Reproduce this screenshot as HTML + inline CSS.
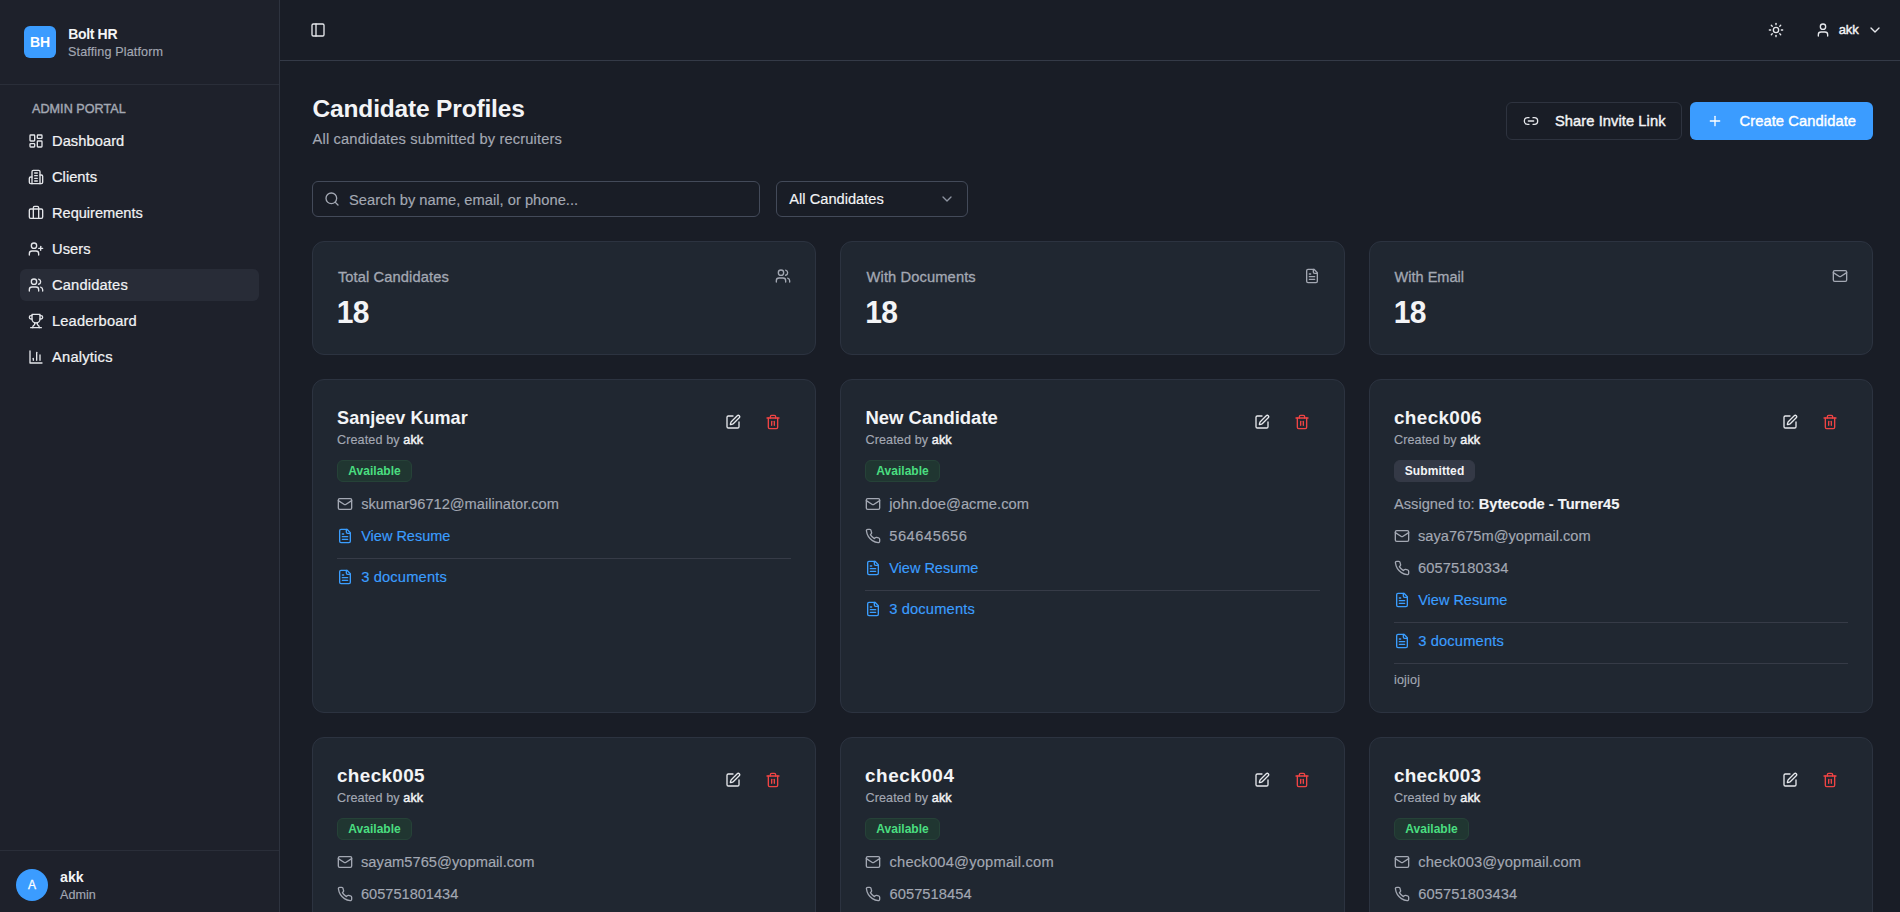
<!DOCTYPE html>
<html lang="en">
<head>
<meta charset="utf-8">
<title>Candidate Profiles</title>
<style>
*{box-sizing:border-box;margin:0;padding:0}
html,body{width:1900px;height:912px;overflow:hidden;background:#191d26;font-family:"Liberation Sans",sans-serif;color:#f3f4f6;-webkit-font-smoothing:antialiased}
svg{display:block;fill:none;stroke:currentColor;stroke-width:2;stroke-linecap:round;stroke-linejoin:round}
.abs{position:absolute}
.t{position:absolute;white-space:nowrap;line-height:1}
/* sidebar */
#side{position:absolute;left:0;top:0;width:280px;height:912px;background:#1e212b;border-right:1px solid #2e333f}
#side .hd{position:absolute;left:0;top:0;width:279px;height:85px;border-bottom:1px solid #2a2e39}
#logo{position:absolute;left:24px;top:26px;width:32px;height:32px;border-radius:6px;background:#3b9cff;color:#fff;font-weight:700;font-size:14px;line-height:32px;text-align:center}
.nav{position:absolute;left:20px;width:239px;height:32px;border-radius:6px;color:#f1f2f4}
.nav.act{background:#282c37}
.nav svg{position:absolute;left:8px;top:8px;width:16px;height:16px;color:#e3e5e9}
.nav span{position:absolute;left:32px;top:0;line-height:32px;font-size:14px;font-weight:400;white-space:nowrap;-webkit-text-stroke:0.22px currentColor}
#side .ft{position:absolute;left:0;top:850px;width:279px;height:62px;border-top:1px solid #2a2e39}
#ava{position:absolute;left:16px;top:869px;width:32px;height:32px;border-radius:16px;background:#3b9cff;color:#fff;font-size:12px;line-height:32px;text-align:center;-webkit-text-stroke:0.3px #fff}
/* header */
#top{position:absolute;left:280px;top:0;width:1620px;height:61px;border-bottom:1px solid #343a47;background:#191d26}
/* main */
.btn{position:absolute;top:102px;height:38px;border-radius:6px}
.card{position:absolute;background:#202731;border:1px solid #2c3340;border-radius:12px}
.muted{color:#a3a8b3}
.blue{color:#3b9eff}
.cn{font-size:18px;font-weight:700}
.cb{font-size:12px}
.cb b{color:#f3f4f6;font-weight:400;-webkit-text-stroke:0.45px currentColor}.row b{color:#f3f4f6;font-weight:700}
.row{font-size:14px;-webkit-text-stroke:0.15px currentColor}
#sub,#ph,#sel,#brand2,#urole,.cb,#nt2{-webkit-text-stroke:0.15px currentColor}
.bdg{height:22px;border-radius:6px;font-size:12px;font-weight:700;line-height:20px;text-align:center}
.bdg.av{background:#203631;border:1px solid #264238;color:#4ade80}
.bdg.sb{background:#343946;border:1px solid #343946;color:#f3f4f6}
.sep{height:1px;background:#363b47}
/*FIT*/
#brand{font-size:14.00px!important;letter-spacing:-0.346px;left:68.25px!important}
#brand2{font-size:12.60px!important;letter-spacing:0.133px;left:68.00px!important}
#portal{font-size:12.60px!important;letter-spacing:0.040px;left:32.00px!important}
#uname{font-size:14.23px!important;letter-spacing:0.008px;left:60.00px!important}
#urole{font-size:12.60px!important;letter-spacing:0.012px;left:60.00px!important}
#hakk{font-size:13.00px!important;letter-spacing:-0.117px;left:1558.75px!important}
#nv0{font-size:14.70px!important;letter-spacing:0.049px;left:32.00px!important}
#nv1{font-size:14.70px!important;letter-spacing:0.016px;left:32.00px!important}
#nv2{font-size:14.58px!important;letter-spacing:-0.001px;left:32.00px!important}
#nv3{font-size:14.70px!important;letter-spacing:0.035px;left:32.00px!important}
#nv4{font-size:14.70px!important;letter-spacing:0.160px;left:32.00px!important}
#nv5{font-size:14.70px!important;letter-spacing:0.144px;left:32.00px!important}
#nv6{font-size:14.70px!important;letter-spacing:0.215px;left:32.00px!important}
#title{font-size:24.50px!important;letter-spacing:-0.171px;left:312.60px!important}
#sub{font-size:14.70px!important;letter-spacing:0.141px;left:312.60px!important}
#b1{font-size:14.70px!important;letter-spacing:0.068px;left:1555.00px!important}
#b2{font-size:14.70px!important;letter-spacing:0.091px;left:1739.50px!important}
#ph{font-size:14.70px!important;letter-spacing:0.015px;left:349.00px!important}
#sel{font-size:14.65px!important;letter-spacing:0.006px;left:789.30px!important}
#sl0{font-size:14.70px!important;letter-spacing:0.099px;left:337.90px!important}
#sl1{font-size:14.70px!important;letter-spacing:0.104px;left:866.60px!important}
#sl2{font-size:14.52px!important;letter-spacing:0.003px;left:1394.60px!important}
#sv0{font-size:30.00px!important;letter-spacing:-0.595px;left:336.70px!important}
#sv1{font-size:30.00px!important;letter-spacing:-0.595px;left:865.20px!important}
#sv2{font-size:30.00px!important;letter-spacing:-0.595px;left:1393.70px!important}
#cn0{font-size:18.07px!important;letter-spacing:0.007px;left:337.10px!important}
#cb0{font-size:12.60px!important;letter-spacing:0.106px;left:337.00px!important}
#bg0{font-size:12.00px!important;letter-spacing:0.031px}
#r0_0{font-size:14.62px!important;letter-spacing:0.006px;left:361.20px!important}
#r0_1{font-size:14.50px!important;letter-spacing:-0.000px;left:361.20px!important}
#d0{font-size:14.70px!important;letter-spacing:0.149px;left:361.20px!important}
#cn1{font-size:18.46px!important;letter-spacing:0.011px;left:865.50px!important}
#cb1{font-size:12.60px!important;letter-spacing:0.106px;left:865.50px!important}
#bg1{font-size:12.00px!important;letter-spacing:0.031px}
#r1_0{font-size:14.70px!important;letter-spacing:0.049px;left:889.20px!important}
#r1_1{font-size:14.70px!important;letter-spacing:0.534px;left:889.20px!important}
#r1_2{font-size:14.50px!important;letter-spacing:-0.000px;left:889.20px!important}
#d1{font-size:14.70px!important;letter-spacing:0.149px;left:889.20px!important}
#cn2{font-size:18.90px!important;letter-spacing:0.358px;left:1394.00px!important}
#cb2{font-size:12.60px!important;letter-spacing:0.106px;left:1394.00px!important}
#bg2{font-size:12.00px!important;letter-spacing:0.116px}
#as2{font-size:14.66px!important;letter-spacing:0.001px;left:1394.00px!important}
#r2_0{font-size:14.63px!important;letter-spacing:0.003px;left:1418.00px!important}
#r2_1{font-size:14.70px!important;letter-spacing:0.054px;left:1418.00px!important}
#r2_2{font-size:14.50px!important;letter-spacing:-0.000px;left:1418.20px!important}
#d2{font-size:14.70px!important;letter-spacing:0.149px;left:1418.20px!important}
#nt2{font-size:12.60px!important;letter-spacing:0.159px;left:1394.00px!important}
#cn3{font-size:18.90px!important;letter-spacing:0.358px;left:337.00px!important}
#cb3{font-size:12.60px!important;letter-spacing:0.106px;left:337.00px!important}
#bg3{font-size:12.00px!important;letter-spacing:0.031px}
#r3_0{font-size:14.70px!important;letter-spacing:0.011px;left:361.00px!important}
#r3_1{font-size:14.58px!important;letter-spacing:0.000px;left:361.00px!important}
#cn4{font-size:18.90px!important;letter-spacing:0.544px;left:865.00px!important}
#cb4{font-size:12.60px!important;letter-spacing:0.106px;left:865.50px!important}
#bg4{font-size:12.00px!important;letter-spacing:0.031px}
#r4_0{font-size:14.70px!important;letter-spacing:0.209px;left:889.50px!important}
#r4_1{font-size:14.70px!important;letter-spacing:0.046px;left:889.50px!important}
#cn5{font-size:18.90px!important;letter-spacing:0.272px;left:1394.00px!important}
#cb5{font-size:12.60px!important;letter-spacing:0.106px;left:1394.00px!important}
#bg5{font-size:12.00px!important;letter-spacing:0.031px}
#r5_0{font-size:14.70px!important;letter-spacing:0.135px;left:1418.30px!important}
#r5_1{font-size:14.70px!important;letter-spacing:0.070px;left:1418.30px!important}
/*ENDFIT*/
</style>
</head>
<body>
<div id="side">
  <div class="hd"></div>
  <div id="logo">BH</div>
  <div class="t" id="brand" style="left:68px;top:27px;font-size:14px;font-weight:700">Bolt HR</div>
  <div class="t muted" id="brand2" style="left:68px;top:46px;font-size:12px">Staffing Platform</div>
  <div class="t muted" id="portal" style="left:32px;top:103px;font-size:12px;font-weight:400;-webkit-text-stroke:0.4px currentColor">ADMIN PORTAL</div>
  <div class="nav" style="top:125px"><svg viewBox="0 0 24 24"><rect width="7" height="9" x="3" y="3" rx="1"/><rect width="7" height="5" x="14" y="3" rx="1"/><rect width="7" height="9" x="14" y="12" rx="1"/><rect width="7" height="5" x="3" y="16" rx="1"/></svg><span id="nv0">Dashboard</span></div>
  <div class="nav" style="top:161px"><svg viewBox="0 0 24 24"><path d="M6 22V4a2 2 0 0 1 2-2h8a2 2 0 0 1 2 2v18Z"/><path d="M6 12H4a2 2 0 0 0-2 2v6a2 2 0 0 0 2 2h2"/><path d="M18 9h2a2 2 0 0 1 2 2v9a2 2 0 0 1-2 2h-2"/><path d="M10 6h4"/><path d="M10 10h4"/><path d="M10 14h4"/><path d="M10 18h4"/></svg><span id="nv1">Clients</span></div>
  <div class="nav" style="top:197px"><svg viewBox="0 0 24 24"><path d="M16 20V4a2 2 0 0 0-2-2h-4a2 2 0 0 0-2 2v16"/><rect width="20" height="14" x="2" y="6" rx="2"/></svg><span id="nv2">Requirements</span></div>
  <div class="nav" style="top:233px"><svg viewBox="0 0 24 24"><path d="M16 21v-2a4 4 0 0 0-4-4H6a4 4 0 0 0-4 4v2"/><circle cx="9" cy="7" r="4"/><line x1="19" x2="19" y1="8" y2="14"/><line x1="22" x2="16" y1="11" y2="11"/></svg><span id="nv3">Users</span></div>
  <div class="nav act" style="top:269px"><svg viewBox="0 0 24 24"><path d="M16 21v-2a4 4 0 0 0-4-4H6a4 4 0 0 0-4 4v2"/><circle cx="9" cy="7" r="4"/><path d="M22 21v-2a4 4 0 0 0-3-3.87"/><path d="M16 3.13a4 4 0 0 1 0 7.75"/></svg><span id="nv4">Candidates</span></div>
  <div class="nav" style="top:305px"><svg viewBox="0 0 24 24"><path d="M6 9H4.5a2.5 2.5 0 0 1 0-5H6"/><path d="M18 9h1.5a2.5 2.5 0 0 0 0-5H18"/><path d="M4 22h16"/><path d="M10 14.66V17c0 .55-.47.98-.97 1.21C7.85 18.75 7 20.24 7 22"/><path d="M14 14.66V17c0 .55.47.98.97 1.21C16.15 18.75 17 20.24 17 22"/><path d="M18 2H6v7a6 6 0 0 0 12 0V2Z"/></svg><span id="nv5">Leaderboard</span></div>
  <div class="nav" style="top:341px"><svg viewBox="0 0 24 24"><path d="M3 3v18h18"/><path d="M18 17V9"/><path d="M13 17V5"/><path d="M8 17v-3"/></svg><span id="nv6">Analytics</span></div>
  <div class="ft"></div>
  <div id="ava">A</div>
  <div class="t" id="uname" style="left:60px;top:870px;font-size:14px;font-weight:700">akk</div>
  <div class="t muted" id="urole" style="left:60px;top:889px;font-size:12px">Admin</div>
</div>
<div id="top">
  <svg class="abs" style="left:30px;top:22px;width:16px;height:16px;color:#e6e8ec" viewBox="0 0 24 24"><rect width="18" height="18" x="3" y="3" rx="2"/><path d="M9 3v18"/></svg>
  <svg class="abs" style="left:1488px;top:22px;width:16px;height:16px;color:#e6e8ec" viewBox="0 0 24 24"><circle cx="12" cy="12" r="4"/><path d="M12 2v2"/><path d="M12 20v2"/><path d="m4.93 4.930 1.41 1.41"/><path d="m17.66 17.66 1.41 1.41"/><path d="M2 12h2"/><path d="M20 12h2"/><path d="m6.340 17.66-1.41 1.41"/><path d="m19.07 4.930-1.41 1.41"/></svg>
  <svg class="abs" style="left:1535px;top:22px;width:16px;height:16px;color:#e6e8ec" viewBox="0 0 24 24"><path d="M19 21v-2a4 4 0 0 0-4-4H9a4 4 0 0 0-4 4v2"/><circle cx="12" cy="7" r="4"/></svg>
  <div class="t" id="hakk" style="left:1559px;top:23px;font-size:13px;font-weight:400;-webkit-text-stroke:0.4px currentColor">akk</div>
  <svg class="abs" style="left:1587px;top:22px;width:16px;height:16px;color:#e6e8ec" viewBox="0 0 24 24"><path d="m6 9 6 6 6-6"/></svg>
</div>
<div class="t" id="title" style="left:312px;top:96.5px;font-size:24.5px;font-weight:700">Candidate Profiles</div>
<div class="t muted" id="sub" style="left:312px;top:132px;font-size:14px">All candidates submitted by recruiters</div>
<div class="btn" style="left:1506px;width:176px;border:1px solid #2e333f;background:#191d26"></div>
<svg class="abs" style="left:1523px;top:113px;width:16px;height:16px;color:#e6e8ec" viewBox="0 0 24 24"><path d="M9 17H7A5 5 0 0 1 7 7h2"/><path d="M15 7h2a5 5 0 1 1 0 10h-2"/><line x1="8" x2="16" y1="12" y2="12"/></svg>
<div class="t" id="b1" style="left:1555px;top:114px;font-size:14px;font-weight:400;-webkit-text-stroke:0.4px currentColor">Share Invite Link</div>
<div class="btn" style="left:1690px;width:183px;background:#3b9cff"></div>
<svg class="abs" style="left:1707px;top:113px;width:16px;height:16px;color:#fff" viewBox="0 0 24 24"><path d="M5 12h14"/><path d="M12 5v14"/></svg>
<div class="t" id="b2" style="left:1739px;top:114px;font-size:14px;font-weight:400;color:#fff;-webkit-text-stroke:0.4px currentColor">Create Candidate</div>
<div class="abs" style="left:312px;top:181px;width:448px;height:36px;border:1px solid #434a59;border-radius:6px;background:#191d26"></div>
<svg class="abs" style="left:324px;top:191px;width:16px;height:16px;color:#a3a8b3" viewBox="0 0 24 24"><circle cx="11" cy="11" r="8"/><path d="m21 21-4.300-4.300"/></svg>
<div class="t muted" id="ph" style="left:349px;top:193px;font-size:14px">Search by name, email, or phone...</div>
<div class="abs" style="left:776px;top:181px;width:192px;height:36px;border:1px solid #434a59;border-radius:6px;background:#191d26"></div>
<div class="t" id="sel" style="left:789px;top:192px;font-size:14px">All Candidates</div>
<svg class="abs" style="left:939px;top:191px;width:16px;height:16px;color:#8d93a0" viewBox="0 0 24 24"><path d="m6 9 6 6 6-6"/></svg>
<div class="card" style="left:312px;top:241px;width:504px;height:114px"></div>
<div class="t muted" id="sl0" style="left:337px;top:269.6px;font-size:14px;-webkit-text-stroke:0.3px currentColor">Total Candidates</div>
<svg class="abs" style="left:775px;top:268px;width:16px;height:16px;color:#a3a8b3" viewBox="0 0 24 24"><path d="M16 21v-2a4 4 0 0 0-4-4H6a4 4 0 0 0-4 4v2"/><circle cx="9" cy="7" r="4"/><path d="M22 21v-2a4 4 0 0 0-3-3.870"/><path d="M16 3.130a4 4 0 0 1 0 7.750"/></svg>
<div class="t" id="sv0" style="left:337px;top:297px;font-size:30px;transform:scaleY(1.07);transform-origin:0 50%;font-weight:700">18</div>
<div class="card" style="left:840px;top:241px;width:505px;height:114px"></div>
<div class="t muted" id="sl1" style="left:865px;top:269.6px;font-size:14px;-webkit-text-stroke:0.3px currentColor">With Documents</div>
<svg class="abs" style="left:1304px;top:268px;width:16px;height:16px;color:#a3a8b3" viewBox="0 0 24 24"><path d="M15 2H6a2 2 0 0 0-2 2v16a2 2 0 0 0 2 2h12a2 2 0 0 0 2-2V7Z"/><path d="M14 2v4a2 2 0 0 0 2 2h4"/><path d="M10 9H8"/><path d="M16 13H8"/><path d="M16 17H8"/></svg>
<div class="t" id="sv1" style="left:865px;top:297px;font-size:30px;transform:scaleY(1.07);transform-origin:0 50%;font-weight:700">18</div>
<div class="card" style="left:1369px;top:241px;width:504px;height:114px"></div>
<div class="t muted" id="sl2" style="left:1394px;top:269.6px;font-size:14px;-webkit-text-stroke:0.3px currentColor">With Email</div>
<svg class="abs" style="left:1832px;top:268px;width:16px;height:16px;color:#a3a8b3" viewBox="0 0 24 24"><rect width="20" height="16" x="2" y="4" rx="2"/><path d="m22 7-8.970 5.700a1.940 1.940 0 0 1-2.060 0L2 7"/></svg>
<div class="t" id="sv2" style="left:1394px;top:297px;font-size:30px;transform:scaleY(1.07);transform-origin:0 50%;font-weight:700">18</div>
<div class="card" style="left:312px;top:379px;width:504px;height:334px"></div>
<div class="t cn" id="cn0" style="left:337px;top:409px">Sanjeev Kumar</div>
<div class="t cb muted" id="cb0" style="left:337px;top:434px">Created by <b>akk</b></div>
<svg class="abs" style="left:725px;top:414px;width:16px;height:16px;color:#e6e8ec" viewBox="0 0 24 24"><path d="M12 3H5a2 2 0 0 0-2 2v14a2 2 0 0 0 2 2h14a2 2 0 0 0 2-2v-7"/><path d="M18.375 2.625a1 1 0 0 1 3 3l-9.013 9.014a2 2 0 0 1-.853.505l-2.873.840a.500.500 0 0 1-.620-.620l.840-2.873a2 2 0 0 1 .506-.852z"/></svg>
<svg class="abs" style="left:765px;top:414px;width:16px;height:16px;color:#ef4444" viewBox="0 0 24 24"><path d="M3 6h18"/><path d="M19 6v14c0 1-1 2-2 2H7c-1 0-2-1-2-2V6"/><path d="M8 6V4c0-1 1-2 2-2h4c1 0 2 1 2 2v2"/><line x1="10" x2="10" y1="11" y2="17"/><line x1="14" x2="14" y1="11" y2="17"/></svg>
<div class="abs bdg av" style="left:337px;top:460px;width:75px"><span id="bg0">Available</span></div>
<svg class="abs" style="left:337px;top:496px;width:16px;height:16px;color:#a3a8b3" viewBox="0 0 24 24"><rect width="20" height="16" x="2" y="4" rx="2"/><path d="m22 7-8.970 5.700a1.940 1.940 0 0 1-2.060 0L2 7"/></svg>
<div class="t row muted" id="r0_0" style="left:361px;top:497px">skumar96712@mailinator.com</div>
<svg class="abs" style="left:337px;top:528px;width:16px;height:16px;color:#3b9eff" viewBox="0 0 24 24"><path d="M15 2H6a2 2 0 0 0-2 2v16a2 2 0 0 0 2 2h12a2 2 0 0 0 2-2V7Z"/><path d="M14 2v4a2 2 0 0 0 2 2h4"/><path d="M10 9H8"/><path d="M16 13H8"/><path d="M16 17H8"/></svg>
<div class="t row blue" id="r0_1" style="left:361px;top:529px">View Resume</div>
<div class="abs sep" style="left:337px;top:558px;width:454px"></div>
<svg class="abs" style="left:337px;top:569px;width:16px;height:16px;color:#3b9eff" viewBox="0 0 24 24"><path d="M15 2H6a2 2 0 0 0-2 2v16a2 2 0 0 0 2 2h12a2 2 0 0 0 2-2V7Z"/><path d="M14 2v4a2 2 0 0 0 2 2h4"/><path d="M10 9H8"/><path d="M16 13H8"/><path d="M16 17H8"/></svg>
<div class="t row blue" id="d0" style="left:361px;top:570px">3 documents</div>
<div class="card" style="left:840px;top:379px;width:505px;height:334px"></div>
<div class="t cn" id="cn1" style="left:865px;top:409px">New Candidate</div>
<div class="t cb muted" id="cb1" style="left:865px;top:434px">Created by <b>akk</b></div>
<svg class="abs" style="left:1254px;top:414px;width:16px;height:16px;color:#e6e8ec" viewBox="0 0 24 24"><path d="M12 3H5a2 2 0 0 0-2 2v14a2 2 0 0 0 2 2h14a2 2 0 0 0 2-2v-7"/><path d="M18.375 2.625a1 1 0 0 1 3 3l-9.013 9.014a2 2 0 0 1-.853.505l-2.873.840a.500.500 0 0 1-.620-.620l.840-2.873a2 2 0 0 1 .506-.852z"/></svg>
<svg class="abs" style="left:1294px;top:414px;width:16px;height:16px;color:#ef4444" viewBox="0 0 24 24"><path d="M3 6h18"/><path d="M19 6v14c0 1-1 2-2 2H7c-1 0-2-1-2-2V6"/><path d="M8 6V4c0-1 1-2 2-2h4c1 0 2 1 2 2v2"/><line x1="10" x2="10" y1="11" y2="17"/><line x1="14" x2="14" y1="11" y2="17"/></svg>
<div class="abs bdg av" style="left:865px;top:460px;width:75px"><span id="bg1">Available</span></div>
<svg class="abs" style="left:865px;top:496px;width:16px;height:16px;color:#a3a8b3" viewBox="0 0 24 24"><rect width="20" height="16" x="2" y="4" rx="2"/><path d="m22 7-8.970 5.700a1.940 1.940 0 0 1-2.060 0L2 7"/></svg>
<div class="t row muted" id="r1_0" style="left:889px;top:497px">john.doe@acme.com</div>
<svg class="abs" style="left:865px;top:528px;width:16px;height:16px;color:#a3a8b3" viewBox="0 0 24 24"><path d="M22 16.920v3a2 2 0 0 1-2.180 2 19.790 19.790 0 0 1-8.630-3.070 19.500 19.500 0 0 1-6-6 19.790 19.790 0 0 1-3.070-8.670A2 2 0 0 1 4.110 2h3a2 2 0 0 1 2 1.720 12.840 12.840 0 0 0 .700 2.810 2 2 0 0 1-.450 2.110L8.090 9.910a16 16 0 0 0 6 6l1.270-1.270a2 2 0 0 1 2.110-.450 12.840 12.840 0 0 0 2.810.700A2 2 0 0 1 22 16.920z"/></svg>
<div class="t row muted" id="r1_1" style="left:889px;top:529px">564645656</div>
<svg class="abs" style="left:865px;top:560px;width:16px;height:16px;color:#3b9eff" viewBox="0 0 24 24"><path d="M15 2H6a2 2 0 0 0-2 2v16a2 2 0 0 0 2 2h12a2 2 0 0 0 2-2V7Z"/><path d="M14 2v4a2 2 0 0 0 2 2h4"/><path d="M10 9H8"/><path d="M16 13H8"/><path d="M16 17H8"/></svg>
<div class="t row blue" id="r1_2" style="left:889px;top:561px">View Resume</div>
<div class="abs sep" style="left:865px;top:590px;width:455px"></div>
<svg class="abs" style="left:865px;top:601px;width:16px;height:16px;color:#3b9eff" viewBox="0 0 24 24"><path d="M15 2H6a2 2 0 0 0-2 2v16a2 2 0 0 0 2 2h12a2 2 0 0 0 2-2V7Z"/><path d="M14 2v4a2 2 0 0 0 2 2h4"/><path d="M10 9H8"/><path d="M16 13H8"/><path d="M16 17H8"/></svg>
<div class="t row blue" id="d1" style="left:889px;top:602px">3 documents</div>
<div class="card" style="left:1369px;top:379px;width:504px;height:334px"></div>
<div class="t cn" id="cn2" style="left:1394px;top:409px">check006</div>
<div class="t cb muted" id="cb2" style="left:1394px;top:434px">Created by <b>akk</b></div>
<svg class="abs" style="left:1782px;top:414px;width:16px;height:16px;color:#e6e8ec" viewBox="0 0 24 24"><path d="M12 3H5a2 2 0 0 0-2 2v14a2 2 0 0 0 2 2h14a2 2 0 0 0 2-2v-7"/><path d="M18.375 2.625a1 1 0 0 1 3 3l-9.013 9.014a2 2 0 0 1-.853.505l-2.873.840a.500.500 0 0 1-.620-.620l.840-2.873a2 2 0 0 1 .506-.852z"/></svg>
<svg class="abs" style="left:1822px;top:414px;width:16px;height:16px;color:#ef4444" viewBox="0 0 24 24"><path d="M3 6h18"/><path d="M19 6v14c0 1-1 2-2 2H7c-1 0-2-1-2-2V6"/><path d="M8 6V4c0-1 1-2 2-2h4c1 0 2 1 2 2v2"/><line x1="10" x2="10" y1="11" y2="17"/><line x1="14" x2="14" y1="11" y2="17"/></svg>
<div class="abs bdg sb" style="left:1394px;top:460px;width:81px"><span id="bg2">Submitted</span></div>
<div class="t row muted" id="as2" style="left:1394px;top:497px">Assigned to: <b>Bytecode - Turner45</b></div>
<svg class="abs" style="left:1394px;top:528px;width:16px;height:16px;color:#a3a8b3" viewBox="0 0 24 24"><rect width="20" height="16" x="2" y="4" rx="2"/><path d="m22 7-8.970 5.700a1.940 1.940 0 0 1-2.060 0L2 7"/></svg>
<div class="t row muted" id="r2_0" style="left:1418px;top:529px">saya7675m@yopmail.com</div>
<svg class="abs" style="left:1394px;top:560px;width:16px;height:16px;color:#a3a8b3" viewBox="0 0 24 24"><path d="M22 16.920v3a2 2 0 0 1-2.180 2 19.790 19.790 0 0 1-8.630-3.070 19.500 19.500 0 0 1-6-6 19.790 19.790 0 0 1-3.070-8.670A2 2 0 0 1 4.110 2h3a2 2 0 0 1 2 1.720 12.840 12.840 0 0 0 .700 2.810 2 2 0 0 1-.450 2.110L8.090 9.910a16 16 0 0 0 6 6l1.270-1.270a2 2 0 0 1 2.110-.450 12.840 12.840 0 0 0 2.810.700A2 2 0 0 1 22 16.920z"/></svg>
<div class="t row muted" id="r2_1" style="left:1418px;top:561px">60575180334</div>
<svg class="abs" style="left:1394px;top:592px;width:16px;height:16px;color:#3b9eff" viewBox="0 0 24 24"><path d="M15 2H6a2 2 0 0 0-2 2v16a2 2 0 0 0 2 2h12a2 2 0 0 0 2-2V7Z"/><path d="M14 2v4a2 2 0 0 0 2 2h4"/><path d="M10 9H8"/><path d="M16 13H8"/><path d="M16 17H8"/></svg>
<div class="t row blue" id="r2_2" style="left:1418px;top:593px">View Resume</div>
<div class="abs sep" style="left:1394px;top:622px;width:454px"></div>
<svg class="abs" style="left:1394px;top:633px;width:16px;height:16px;color:#3b9eff" viewBox="0 0 24 24"><path d="M15 2H6a2 2 0 0 0-2 2v16a2 2 0 0 0 2 2h12a2 2 0 0 0 2-2V7Z"/><path d="M14 2v4a2 2 0 0 0 2 2h4"/><path d="M10 9H8"/><path d="M16 13H8"/><path d="M16 17H8"/></svg>
<div class="t row blue" id="d2" style="left:1418px;top:634px">3 documents</div>
<div class="abs sep" style="left:1394px;top:663px;width:454px"></div>
<div class="t muted" id="nt2" style="left:1394px;top:674px;font-size:12px">iojioj</div>
<div class="card" style="left:312px;top:737px;width:504px;height:300px"></div>
<div class="t cn" id="cn3" style="left:337px;top:767px">check005</div>
<div class="t cb muted" id="cb3" style="left:337px;top:792px">Created by <b>akk</b></div>
<svg class="abs" style="left:725px;top:772px;width:16px;height:16px;color:#e6e8ec" viewBox="0 0 24 24"><path d="M12 3H5a2 2 0 0 0-2 2v14a2 2 0 0 0 2 2h14a2 2 0 0 0 2-2v-7"/><path d="M18.375 2.625a1 1 0 0 1 3 3l-9.013 9.014a2 2 0 0 1-.853.505l-2.873.840a.500.500 0 0 1-.620-.620l.840-2.873a2 2 0 0 1 .506-.852z"/></svg>
<svg class="abs" style="left:765px;top:772px;width:16px;height:16px;color:#ef4444" viewBox="0 0 24 24"><path d="M3 6h18"/><path d="M19 6v14c0 1-1 2-2 2H7c-1 0-2-1-2-2V6"/><path d="M8 6V4c0-1 1-2 2-2h4c1 0 2 1 2 2v2"/><line x1="10" x2="10" y1="11" y2="17"/><line x1="14" x2="14" y1="11" y2="17"/></svg>
<div class="abs bdg av" style="left:337px;top:818px;width:75px"><span id="bg3">Available</span></div>
<svg class="abs" style="left:337px;top:854px;width:16px;height:16px;color:#a3a8b3" viewBox="0 0 24 24"><rect width="20" height="16" x="2" y="4" rx="2"/><path d="m22 7-8.970 5.700a1.940 1.940 0 0 1-2.060 0L2 7"/></svg>
<div class="t row muted" id="r3_0" style="left:361px;top:855px">sayam5765@yopmail.com</div>
<svg class="abs" style="left:337px;top:886px;width:16px;height:16px;color:#a3a8b3" viewBox="0 0 24 24"><path d="M22 16.920v3a2 2 0 0 1-2.180 2 19.790 19.790 0 0 1-8.630-3.070 19.500 19.500 0 0 1-6-6 19.790 19.790 0 0 1-3.070-8.670A2 2 0 0 1 4.110 2h3a2 2 0 0 1 2 1.720 12.840 12.840 0 0 0 .700 2.810 2 2 0 0 1-.450 2.110L8.090 9.910a16 16 0 0 0 6 6l1.270-1.270a2 2 0 0 1 2.110-.450 12.840 12.840 0 0 0 2.810.700A2 2 0 0 1 22 16.920z"/></svg>
<div class="t row muted" id="r3_1" style="left:361px;top:887px">605751801434</div>
<div class="card" style="left:840px;top:737px;width:505px;height:300px"></div>
<div class="t cn" id="cn4" style="left:865px;top:767px">check004</div>
<div class="t cb muted" id="cb4" style="left:865px;top:792px">Created by <b>akk</b></div>
<svg class="abs" style="left:1254px;top:772px;width:16px;height:16px;color:#e6e8ec" viewBox="0 0 24 24"><path d="M12 3H5a2 2 0 0 0-2 2v14a2 2 0 0 0 2 2h14a2 2 0 0 0 2-2v-7"/><path d="M18.375 2.625a1 1 0 0 1 3 3l-9.013 9.014a2 2 0 0 1-.853.505l-2.873.840a.500.500 0 0 1-.620-.620l.840-2.873a2 2 0 0 1 .506-.852z"/></svg>
<svg class="abs" style="left:1294px;top:772px;width:16px;height:16px;color:#ef4444" viewBox="0 0 24 24"><path d="M3 6h18"/><path d="M19 6v14c0 1-1 2-2 2H7c-1 0-2-1-2-2V6"/><path d="M8 6V4c0-1 1-2 2-2h4c1 0 2 1 2 2v2"/><line x1="10" x2="10" y1="11" y2="17"/><line x1="14" x2="14" y1="11" y2="17"/></svg>
<div class="abs bdg av" style="left:865px;top:818px;width:75px"><span id="bg4">Available</span></div>
<svg class="abs" style="left:865px;top:854px;width:16px;height:16px;color:#a3a8b3" viewBox="0 0 24 24"><rect width="20" height="16" x="2" y="4" rx="2"/><path d="m22 7-8.970 5.700a1.940 1.940 0 0 1-2.060 0L2 7"/></svg>
<div class="t row muted" id="r4_0" style="left:889px;top:855px">check004@yopmail.com</div>
<svg class="abs" style="left:865px;top:886px;width:16px;height:16px;color:#a3a8b3" viewBox="0 0 24 24"><path d="M22 16.920v3a2 2 0 0 1-2.180 2 19.790 19.790 0 0 1-8.630-3.070 19.500 19.500 0 0 1-6-6 19.790 19.790 0 0 1-3.070-8.670A2 2 0 0 1 4.110 2h3a2 2 0 0 1 2 1.720 12.840 12.840 0 0 0 .700 2.810 2 2 0 0 1-.450 2.110L8.090 9.910a16 16 0 0 0 6 6l1.270-1.270a2 2 0 0 1 2.110-.450 12.840 12.840 0 0 0 2.810.700A2 2 0 0 1 22 16.920z"/></svg>
<div class="t row muted" id="r4_1" style="left:889px;top:887px">6057518454</div>
<div class="card" style="left:1369px;top:737px;width:504px;height:300px"></div>
<div class="t cn" id="cn5" style="left:1394px;top:767px">check003</div>
<div class="t cb muted" id="cb5" style="left:1394px;top:792px">Created by <b>akk</b></div>
<svg class="abs" style="left:1782px;top:772px;width:16px;height:16px;color:#e6e8ec" viewBox="0 0 24 24"><path d="M12 3H5a2 2 0 0 0-2 2v14a2 2 0 0 0 2 2h14a2 2 0 0 0 2-2v-7"/><path d="M18.375 2.625a1 1 0 0 1 3 3l-9.013 9.014a2 2 0 0 1-.853.505l-2.873.840a.500.500 0 0 1-.620-.620l.840-2.873a2 2 0 0 1 .506-.852z"/></svg>
<svg class="abs" style="left:1822px;top:772px;width:16px;height:16px;color:#ef4444" viewBox="0 0 24 24"><path d="M3 6h18"/><path d="M19 6v14c0 1-1 2-2 2H7c-1 0-2-1-2-2V6"/><path d="M8 6V4c0-1 1-2 2-2h4c1 0 2 1 2 2v2"/><line x1="10" x2="10" y1="11" y2="17"/><line x1="14" x2="14" y1="11" y2="17"/></svg>
<div class="abs bdg av" style="left:1394px;top:818px;width:75px"><span id="bg5">Available</span></div>
<svg class="abs" style="left:1394px;top:854px;width:16px;height:16px;color:#a3a8b3" viewBox="0 0 24 24"><rect width="20" height="16" x="2" y="4" rx="2"/><path d="m22 7-8.970 5.700a1.940 1.940 0 0 1-2.060 0L2 7"/></svg>
<div class="t row muted" id="r5_0" style="left:1418px;top:855px">check003@yopmail.com</div>
<svg class="abs" style="left:1394px;top:886px;width:16px;height:16px;color:#a3a8b3" viewBox="0 0 24 24"><path d="M22 16.920v3a2 2 0 0 1-2.180 2 19.790 19.790 0 0 1-8.630-3.070 19.500 19.500 0 0 1-6-6 19.790 19.790 0 0 1-3.070-8.670A2 2 0 0 1 4.110 2h3a2 2 0 0 1 2 1.720 12.840 12.840 0 0 0 .700 2.810 2 2 0 0 1-.450 2.110L8.090 9.910a16 16 0 0 0 6 6l1.270-1.270a2 2 0 0 1 2.110-.450 12.840 12.840 0 0 0 2.810.700A2 2 0 0 1 22 16.920z"/></svg>
<div class="t row muted" id="r5_1" style="left:1418px;top:887px">605751803434</div>
</body>
</html>
